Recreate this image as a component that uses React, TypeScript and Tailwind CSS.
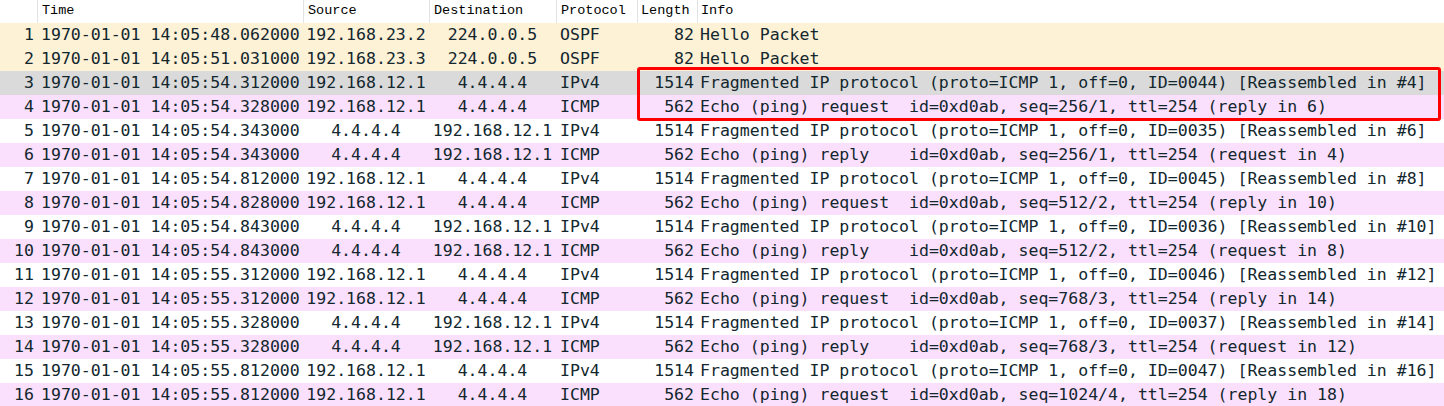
// App.tsx

type Kind = "ospf" | "frag" | "icmp"

interface Packet {
  no: number
  time: string
  src: string
  dst: string
  proto: string
  len: number
  info: string
  kind: Kind
}

const packets: Packet[] = [
  { no: 1, time: "14:05:48.062000", src: "192.168.23.2", dst: "224.0.0.5", proto: "OSPF", len: 82, info: "Hello Packet", kind: "ospf" },
  { no: 2, time: "14:05:51.031000", src: "192.168.23.3", dst: "224.0.0.5", proto: "OSPF", len: 82, info: "Hello Packet", kind: "ospf" },
  { no: 3, time: "14:05:54.312000", src: "192.168.12.1", dst: "4.4.4.4", proto: "IPv4", len: 1514, info: "Fragmented IP protocol (proto=ICMP 1, off=0, ID=0044) [Reassembled in #4]", kind: "frag" },
  { no: 4, time: "14:05:54.328000", src: "192.168.12.1", dst: "4.4.4.4", proto: "ICMP", len: 562, info: "Echo (ping) request  id=0xd0ab, seq=256/1, ttl=254 (reply in 6)", kind: "icmp" },
  { no: 5, time: "14:05:54.343000", src: "4.4.4.4", dst: "192.168.12.1", proto: "IPv4", len: 1514, info: "Fragmented IP protocol (proto=ICMP 1, off=0, ID=0035) [Reassembled in #6]", kind: "frag" },
  { no: 6, time: "14:05:54.343000", src: "4.4.4.4", dst: "192.168.12.1", proto: "ICMP", len: 562, info: "Echo (ping) reply    id=0xd0ab, seq=256/1, ttl=254 (request in 4)", kind: "icmp" },
  { no: 7, time: "14:05:54.812000", src: "192.168.12.1", dst: "4.4.4.4", proto: "IPv4", len: 1514, info: "Fragmented IP protocol (proto=ICMP 1, off=0, ID=0045) [Reassembled in #8]", kind: "frag" },
  { no: 8, time: "14:05:54.828000", src: "192.168.12.1", dst: "4.4.4.4", proto: "ICMP", len: 562, info: "Echo (ping) request  id=0xd0ab, seq=512/2, ttl=254 (reply in 10)", kind: "icmp" },
  { no: 9, time: "14:05:54.843000", src: "4.4.4.4", dst: "192.168.12.1", proto: "IPv4", len: 1514, info: "Fragmented IP protocol (proto=ICMP 1, off=0, ID=0036) [Reassembled in #10]", kind: "frag" },
  { no: 10, time: "14:05:54.843000", src: "4.4.4.4", dst: "192.168.12.1", proto: "ICMP", len: 562, info: "Echo (ping) reply    id=0xd0ab, seq=512/2, ttl=254 (request in 8)", kind: "icmp" },
  { no: 11, time: "14:05:55.312000", src: "192.168.12.1", dst: "4.4.4.4", proto: "IPv4", len: 1514, info: "Fragmented IP protocol (proto=ICMP 1, off=0, ID=0046) [Reassembled in #12]", kind: "frag" },
  { no: 12, time: "14:05:55.312000", src: "192.168.12.1", dst: "4.4.4.4", proto: "ICMP", len: 562, info: "Echo (ping) request  id=0xd0ab, seq=768/3, ttl=254 (reply in 14)", kind: "icmp" },
  { no: 13, time: "14:05:55.328000", src: "4.4.4.4", dst: "192.168.12.1", proto: "IPv4", len: 1514, info: "Fragmented IP protocol (proto=ICMP 1, off=0, ID=0037) [Reassembled in #14]", kind: "frag" },
  { no: 14, time: "14:05:55.328000", src: "4.4.4.4", dst: "192.168.12.1", proto: "ICMP", len: 562, info: "Echo (ping) reply    id=0xd0ab, seq=768/3, ttl=254 (request in 12)", kind: "icmp" },
  { no: 15, time: "14:05:55.812000", src: "192.168.12.1", dst: "4.4.4.4", proto: "IPv4", len: 1514, info: "Fragmented IP protocol (proto=ICMP 1, off=0, ID=0047) [Reassembled in #16]", kind: "frag" },
  { no: 16, time: "14:05:55.812000", src: "192.168.12.1", dst: "4.4.4.4", proto: "ICMP", len: 562, info: "Echo (ping) request  id=0xd0ab, seq=1024/4, ttl=254 (reply in 18)", kind: "icmp" },
]

const cols = "grid grid-cols-[37px_266px_126px_127px_81px_60px_1fr]"

function rowBg(p: Packet) {
  if (p.no === 3) return "bg-[#dadada]"
  if (p.kind === "ospf") return "bg-[#fdf1d6]"
  if (p.kind === "icmp") return "bg-[#fbe0fd]"
  return "bg-white"
}

export default function App() {
  return (
    <div className="relative w-[1444px] h-[406px] overflow-hidden bg-white text-[#12272e]">
      {/* header */}
      <div className={`${cols} h-[23px] items-center font-['Liberation_Mono',monospace] text-[13.5px] text-black`}>
        <div className="h-full" />
        <div className="h-full border-l border-[#e3e3e3] pl-[4px] flex items-center">Time</div>
        <div className="h-full border-l border-[#e3e3e3] pl-[4px] flex items-center">Source</div>
        <div className="h-full border-l border-[#e3e3e3] pl-[4px] flex items-center">Destination</div>
        <div className="h-full border-l border-[#e3e3e3] pl-[4px] flex items-center">Protocol</div>
        <div className="h-full border-l border-[#e3e3e3] pl-[3px] flex items-center">Length</div>
        <div className="h-full border-l border-[#e3e3e3] pl-[3px] flex items-center">Info</div>
      </div>

      {/* packet rows */}
      <div className="font-['DejaVu_Sans_Mono',monospace] text-[16.55px] whitespace-pre">
        {packets.map((p) => (
          <div key={p.no} className={`${cols} h-[24px] items-center ${rowBg(p)}`}>
            <div className="text-right pr-[3px]">{p.no}</div>
            <div className="pl-[4px]">1970-01-01 {p.time}</div>
            <div className="text-center">{p.src}</div>
            <div className="text-center">{p.dst}</div>
            <div className="pl-[4px]">{p.proto}</div>
            <div className="text-right pr-[3px]">{p.len}</div>
            <div className="pl-[3px]">{p.info}</div>
          </div>
        ))}
      </div>

      {/* highlight box */}
      <div className="absolute left-[637px] top-[67px] w-[804px] h-[54px] border-[3px] border-[#ff0000] rounded-[3px]" />
    </div>
  )
}
